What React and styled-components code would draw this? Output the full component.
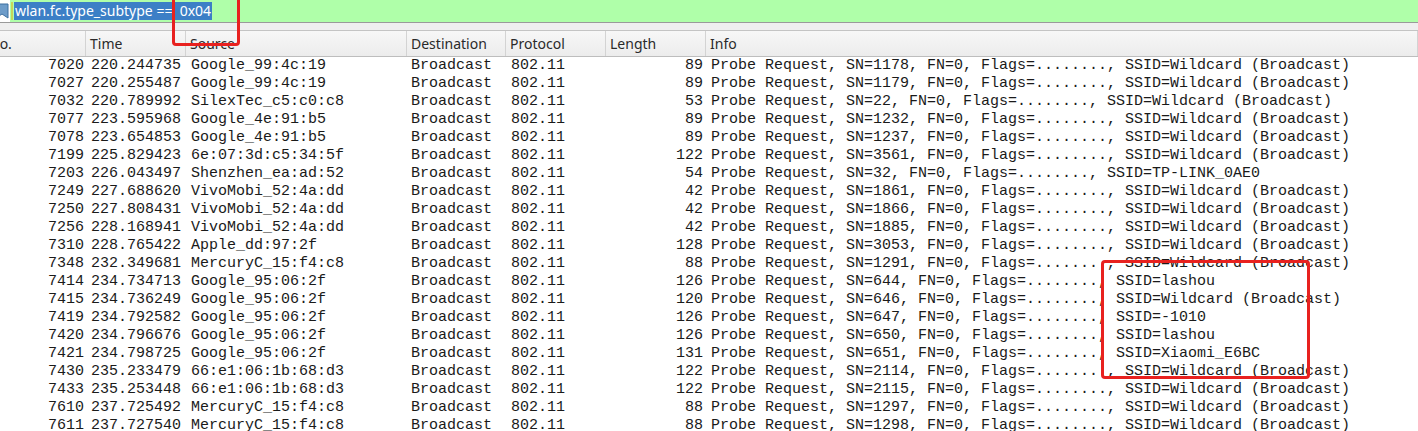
import React from "react";
import styled, { createGlobalStyle } from "styled-components";

const GlobalStyle = createGlobalStyle`
  html, body {
    margin: 0;
    padding: 0;
    background: #ffffff;
    overflow: hidden;
  }
`;

const COLS = "86px 100px 221px 99px 100px 100px 1fr";

const rows = [
  ["7020", "220.244735", "Google_99:4c:19", "89", "Probe Request, SN=1178, FN=0, Flags=........, SSID=Wildcard (Broadcast)"],
  ["7027", "220.255487", "Google_99:4c:19", "89", "Probe Request, SN=1179, FN=0, Flags=........, SSID=Wildcard (Broadcast)"],
  ["7032", "220.789992", "SilexTec_c5:c0:c8", "53", "Probe Request, SN=22, FN=0, Flags=........, SSID=Wildcard (Broadcast)"],
  ["7077", "223.595968", "Google_4e:91:b5", "89", "Probe Request, SN=1232, FN=0, Flags=........, SSID=Wildcard (Broadcast)"],
  ["7078", "223.654853", "Google_4e:91:b5", "89", "Probe Request, SN=1237, FN=0, Flags=........, SSID=Wildcard (Broadcast)"],
  ["7199", "225.829423", "6e:07:3d:c5:34:5f", "122", "Probe Request, SN=3561, FN=0, Flags=........, SSID=Wildcard (Broadcast)"],
  ["7203", "226.043497", "Shenzhen_ea:ad:52", "54", "Probe Request, SN=32, FN=0, Flags=........, SSID=TP-LINK_0AE0"],
  ["7249", "227.688620", "VivoMobi_52:4a:dd", "42", "Probe Request, SN=1861, FN=0, Flags=........, SSID=Wildcard (Broadcast)"],
  ["7250", "227.808431", "VivoMobi_52:4a:dd", "42", "Probe Request, SN=1866, FN=0, Flags=........, SSID=Wildcard (Broadcast)"],
  ["7256", "228.168941", "VivoMobi_52:4a:dd", "42", "Probe Request, SN=1885, FN=0, Flags=........, SSID=Wildcard (Broadcast)"],
  ["7310", "228.765422", "Apple_dd:97:2f", "128", "Probe Request, SN=3053, FN=0, Flags=........, SSID=Wildcard (Broadcast)"],
  ["7348", "232.349681", "MercuryC_15:f4:c8", "88", "Probe Request, SN=1291, FN=0, Flags=........, SSID=Wildcard (Broadcast)"],
  ["7414", "234.734713", "Google_95:06:2f", "126", "Probe Request, SN=644, FN=0, Flags=........, SSID=lashou"],
  ["7415", "234.736249", "Google_95:06:2f", "120", "Probe Request, SN=646, FN=0, Flags=........, SSID=Wildcard (Broadcast)"],
  ["7419", "234.792582", "Google_95:06:2f", "126", "Probe Request, SN=647, FN=0, Flags=........, SSID=-1010"],
  ["7420", "234.796676", "Google_95:06:2f", "126", "Probe Request, SN=650, FN=0, Flags=........, SSID=lashou"],
  ["7421", "234.798725", "Google_95:06:2f", "131", "Probe Request, SN=651, FN=0, Flags=........, SSID=Xiaomi_E6BC"],
  ["7430", "235.233479", "66:e1:06:1b:68:d3", "122", "Probe Request, SN=2114, FN=0, Flags=........, SSID=Wildcard (Broadcast)"],
  ["7433", "235.253448", "66:e1:06:1b:68:d3", "122", "Probe Request, SN=2115, FN=0, Flags=........, SSID=Wildcard (Broadcast)"],
  ["7610", "237.725492", "MercuryC_15:f4:c8", "88", "Probe Request, SN=1297, FN=0, Flags=........, SSID=Wildcard (Broadcast)"],
  ["7611", "237.727540", "MercuryC_15:f4:c8", "88", "Probe Request, SN=1298, FN=0, Flags=........, SSID=Wildcard (Broadcast)"],
];

const Page = styled.div`
  position: relative;
  width: 1418px;
  height: 431px;
  overflow: hidden;
  background: #ffffff;
`;

const FilterBar = styled.div`
  display: flex;
  align-items: center;
  height: 22px;
  background: #afffa9;
  border-bottom: 1px solid #9a9a9a;
`;

const BookmarkBtn = styled.div`
  width: 10px;
  height: 22px;
  background: #ffffff;
  display: flex;
  align-items: center;
  overflow: hidden;
`;

const Caret = styled.div`
  width: 2px;
  height: 18px;
  margin: 0 1px 0 1px;
  background: #c6d65a;
`;

const Selected = styled.span`
  background: #3c7fc6;
  color: #ffffff;
  font-family: "Noto Sans", "Open Sans", sans-serif;
  font-size: 14px;
  line-height: 18px;
  padding: 0 1px;
  white-space: pre;
`;

const Spacer = styled.div`
  height: 7px;
  background: #efefef;
  border-bottom: 1px solid #c4c4c4;
`;

const HeaderRow = styled.div`
  display: grid;
  grid-template-columns: ${COLS};
  height: 25px;
  background: linear-gradient(#f7f7f7, #ececec);
  border-bottom: 1px solid #bdbdbd;
`;

const HeadCell = styled.div`
  display: flex;
  align-items: center;
  padding-left: ${(p) => p.$pad ?? 4}px;
  border-right: 1px solid #d3d3d3;
  font-family: "Noto Sans", "Open Sans", sans-serif;
  font-size: 14px;
  color: #2a2a2a;
  overflow: hidden;
  white-space: nowrap;
`;

const Row = styled.div`
  display: grid;
  grid-template-columns: ${COLS};
  height: 18px;
  align-items: center;
`;

const Cell = styled.div`
  font-family: "Liberation Mono", "DejaVu Sans Mono", monospace;
  font-size: 15px;
  line-height: 18px;
  color: #1a1a1a;
  white-space: pre;
  overflow: hidden;
  text-align: ${(p) => (p.$right ? "right" : "left")};
  padding-left: ${(p) => (p.$right ? 0 : p.$pad ?? 5)}px;
  padding-right: ${(p) => (p.$right ? p.$pad ?? 3 : 0)}px;
`;

const Mark = styled.div`
  position: absolute;
  border: 3px solid #e8211f;
  border-radius: 4px;
  pointer-events: none;
`;

const BookmarkIcon = () => (
  <svg width="14" height="16" viewBox="0 0 14 16" style={{ marginLeft: -5 }}>
    <path d="M1 1h12v14l-6-4-6 4z" fill="#6d9cc9" stroke="#3d6fa0" strokeWidth="1" />
  </svg>
);

export default function App() {
  return (
    <Page>
      <GlobalStyle />
      <FilterBar>
        <BookmarkBtn>
          <BookmarkIcon />
        </BookmarkBtn>
        <Caret />
        <Selected>wlan.fc.type_subtype ==  0x04</Selected>
      </FilterBar>
      <Spacer />
      <HeaderRow>
        <HeadCell $pad={0}>
          <span style={{ marginLeft: -11 }}>No.</span>
        </HeadCell>
        <HeadCell>Time</HeadCell>
        <HeadCell>Source</HeadCell>
        <HeadCell>Destination</HeadCell>
        <HeadCell>Protocol</HeadCell>
        <HeadCell>Length</HeadCell>
        <HeadCell>Info</HeadCell>
      </HeaderRow>
      {rows.map((r) => (
        <Row key={r[0]}>
          <Cell $right $pad={2}>{r[0]}</Cell>
          <Cell>{r[1]}</Cell>
          <Cell>{r[2]}</Cell>
          <Cell $pad={4}>Broadcast</Cell>
          <Cell>802.11</Cell>
          <Cell $right>{r[3]}</Cell>
          <Cell>{r[4]}</Cell>
        </Row>
      ))}
      <Mark style={{ left: 172, top: -4, width: 62, height: 44 }} />
      <Mark style={{ left: 1101, top: 260, width: 203, height: 113 }} />
    </Page>
  );
}
